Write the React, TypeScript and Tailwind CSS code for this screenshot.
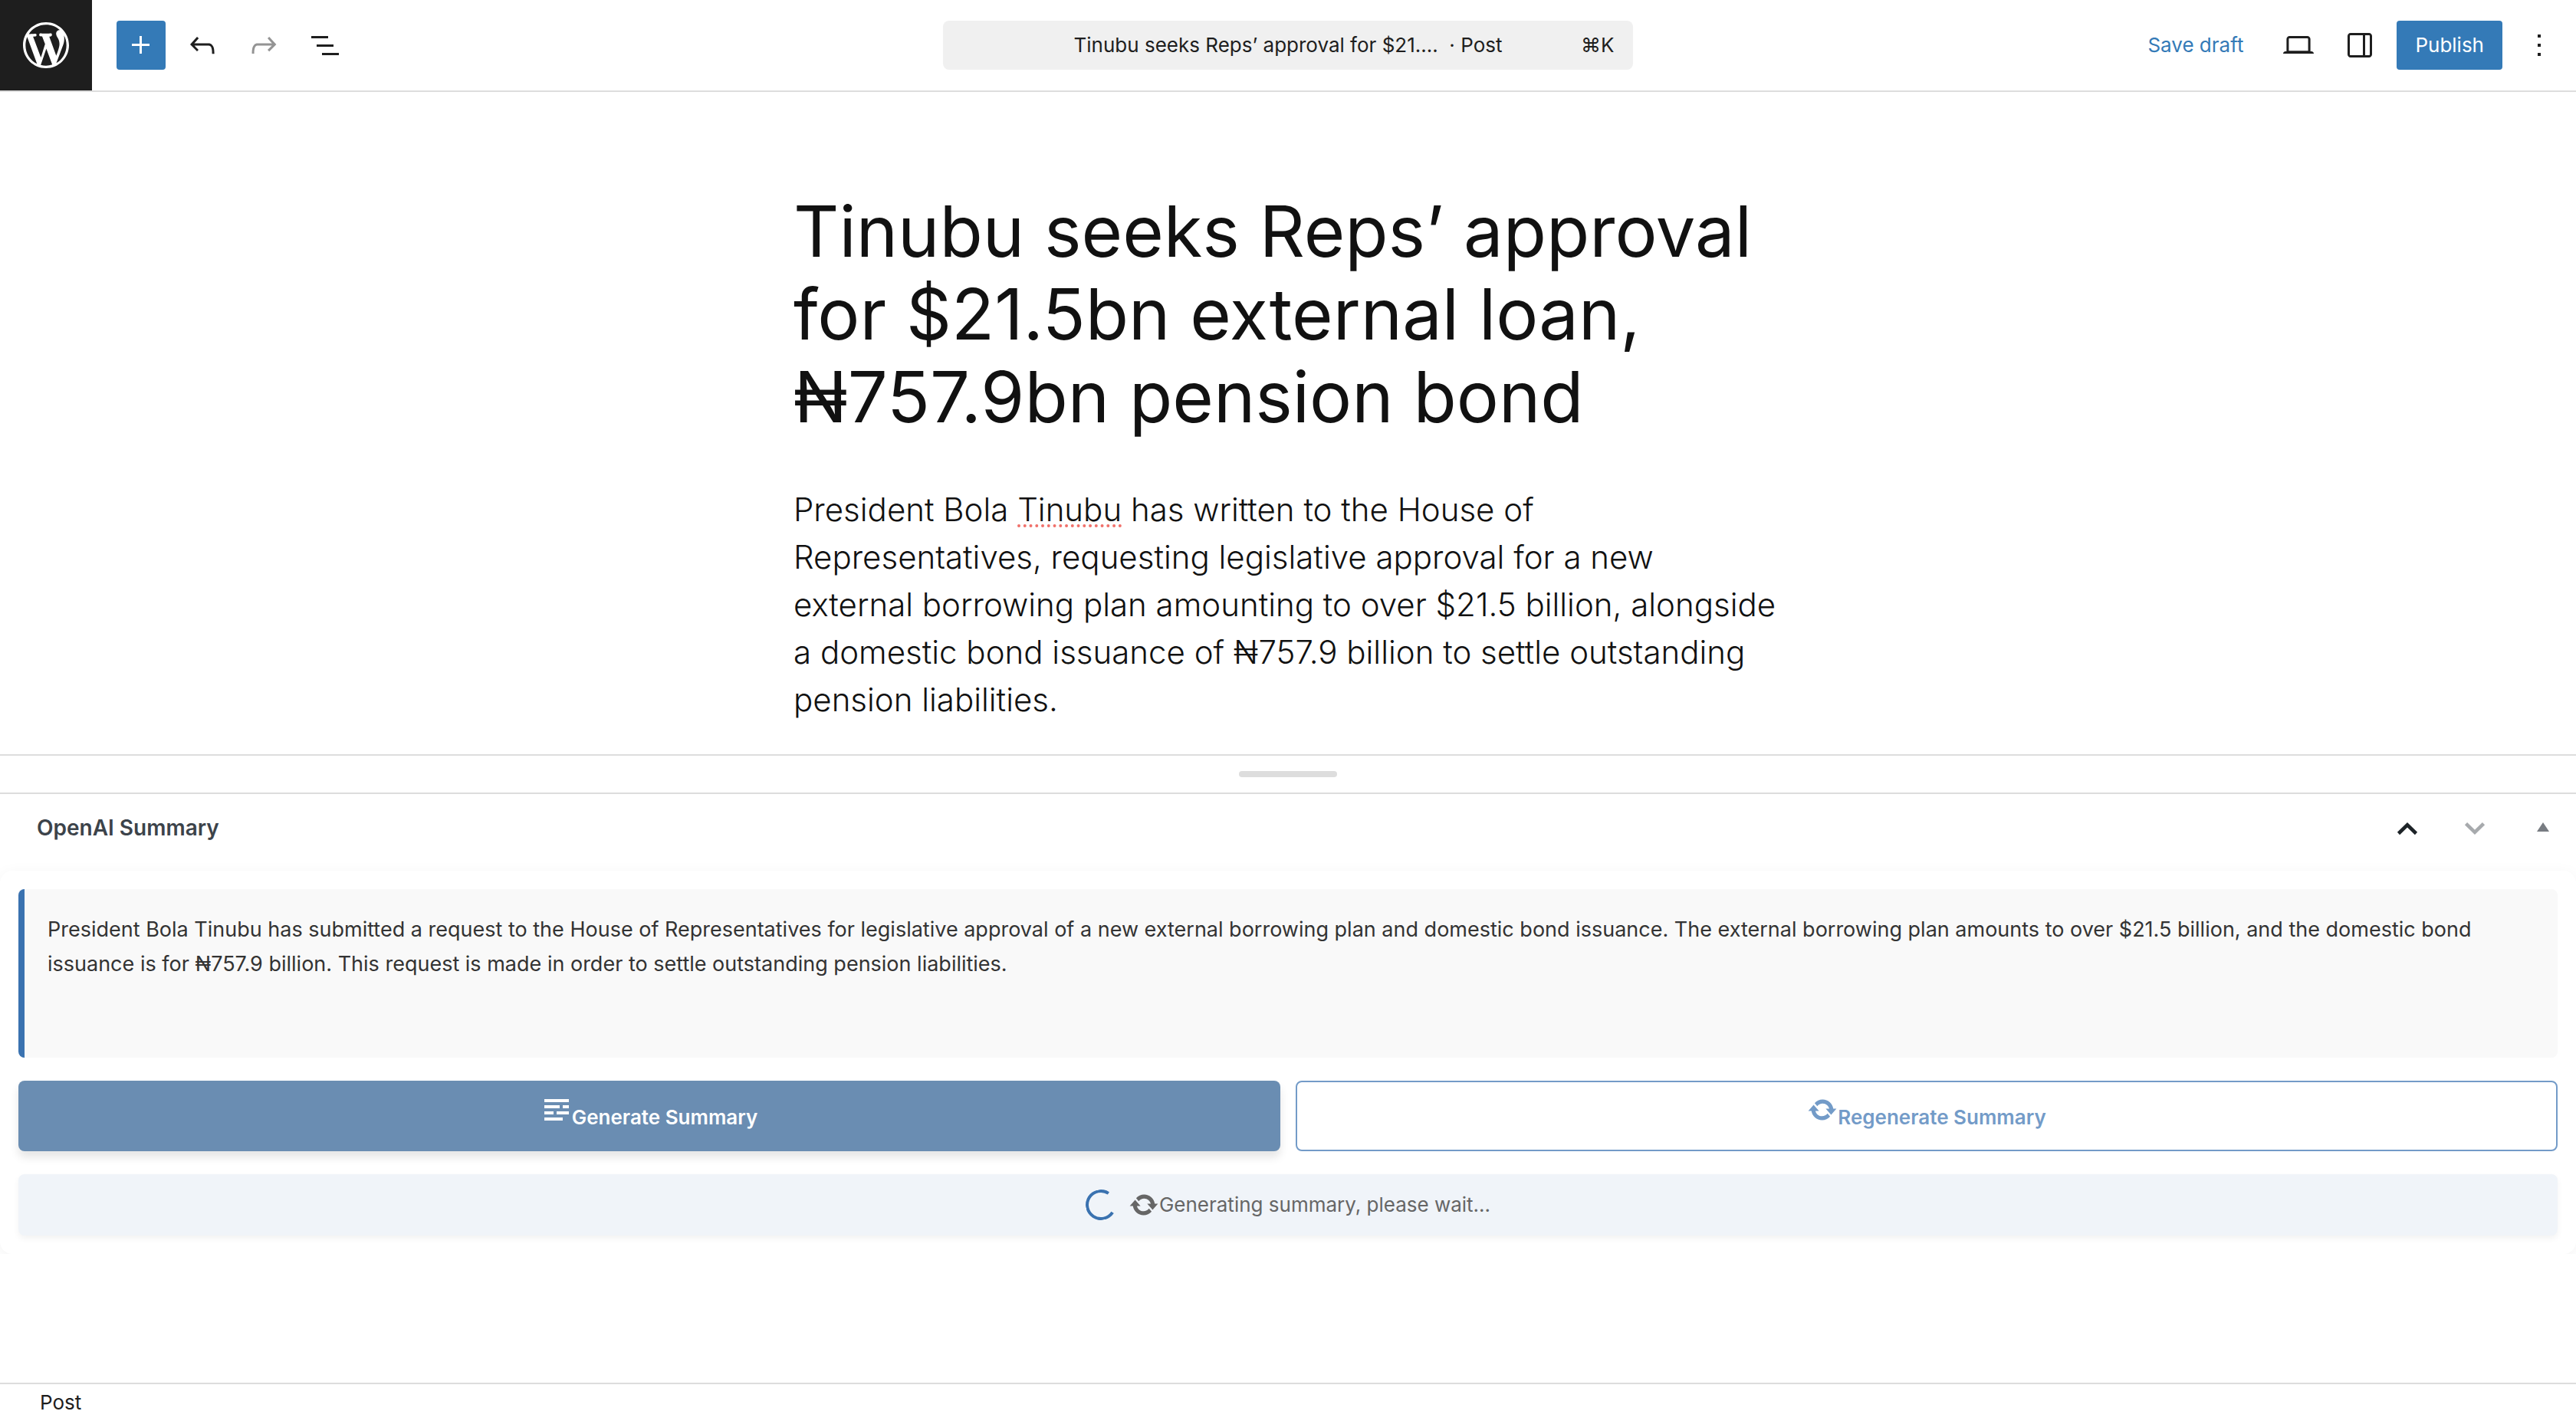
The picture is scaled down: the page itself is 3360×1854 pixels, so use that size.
import { useState } from "react";
import type { ReactNode } from "react";

const PATHS = {
  wordpress:
    "M20 10c0-5.51-4.49-10-10-10C4.48 0 0 4.49 0 10c0 5.52 4.48 10 10 10 5.51 0 10-4.48 10-10zM7.78 15.37L4.37 6.22c.55-.02 1.17-.08 1.17-.08.5-.06.44-1.13-.06-1.11 0 0-1.45.11-2.37.11-.18 0-.37 0-.58-.01C4.12 2.69 6.87 1.11 10 1.11c2.33 0 4.45.87 6.05 2.34-.68-.11-1.65.39-1.65 1.58 0 .74.45 1.36.9 2.1.35.61.55 1.36.55 2.46 0 1.49-1.4 5-1.4 5l-3.03-8.37c.54-.02.82-.17.82-.17.5-.05.44-1.25-.06-1.22 0 0-1.44.12-2.38.12-.87 0-2.33-.12-2.33-.12-.5-.03-.56 1.2-.06 1.22l.92.08 1.26 3.41zM17.41 10c.24-.64.74-1.87.43-4.25.7 1.29 1.05 2.71 1.05 4.25 0 3.29-1.73 6.24-4.4 7.78.97-2.59 1.94-5.2 2.92-7.78zM6.1 18.09C3.12 16.65 1.11 13.53 1.11 10c0-1.3.23-2.48.72-3.59C3.25 10.3 4.67 14.2 6.1 18.09zm4.03-6.63l2.58 6.98c-.86.29-1.76.45-2.71.45-.79 0-1.57-.11-2.29-.33.81-2.38 1.62-4.74 2.42-7.1z",
  plus: "M11 12.5V17.5H12.5V12.5H17.5V11H12.5V6H11V11H6V12.5H11Z",
  undo: "M18.3 11.7c-.6-.6-1.4-.9-2.3-.9H6.7l2.9-3.3-1.1-1-4.5 5L8.5 16l1-1-2.7-2.7H16c.5 0 .9.2 1.3.5 1 1 1 3.4 1 4.5v.3h1.5v-.2c0-1.5 0-4.3-1.5-5.7z",
  redo: "M15.6 6.5l-1.1 1 2.9 3.3H8c-.9 0-1.7.3-2.3.9-1.4 1.5-1.4 4.2-1.4 5.6v.2h1.5v-.3c0-1.1 0-3.5 1-4.5.3-.3.7-.5 1.3-.5h9.2L14.5 15l1.1 1.1 4.6-4.6-4.6-5z",
  listView: "M3 6h11v1.5H3V6Zm3.5 5.5h11V13h-11v-1.5ZM21 17H10v1.5h11V17Z",
  desktop:
    "M20.5 16h-.7V8c0-1.1-.9-2-2-2H6.2c-1.1 0-2 .9-2 2v8h-.7c-.8 0-1.5.7-1.5 1.5h20c0-.8-.7-1.5-1.5-1.5zM5.7 8c0-.3.2-.5.5-.5h11.6c.3 0 .5.2.5.5v7.6H5.7V8z",
  drawer:
    "M18 4H6c-1.1 0-2 .9-2 2v12c0 1.1.9 2 2 2h12c1.1 0 2-.9 2-2V6c0-1.1-.9-2-2-2zm-4 14.5H6c-.3 0-.5-.2-.5-.5V6c0-.3.2-.5.5-.5h8v13zm4.5-.5c0 .3-.2.5-.5.5h-2.5v-13H18c.3 0 .5.2.5.5v12z",
  more: "M13 19h-2v-2h2v2zm0-6h-2v-2h2v2zm0-6h-2V5h2v2z",
  text: "M18 3v2H2V3h16zm-6 4v2H2V7h10zm6 0v2h-4V7h4zM8 11v2H2v-2h6zm10 0v2h-8v-2h8zm-4 4v2H2v-2h12z",
  update:
    "M10.2 3.28c3.53 0 6.43 2.61 6.92 6h2.08l-3.5 4-3.5-4h2.32c-.45-1.97-2.21-3.45-4.32-3.45-1.45 0-2.73.71-3.54 1.78L4.95 5.66C6.23 4.2 8.11 3.28 10.2 3.28zm-.4 13.44c-3.52 0-6.43-2.61-6.92-6H.8l3.5-4c1.17 1.33 2.33 2.67 3.5 4H5.48c.45 1.97 2.21 3.45 4.32 3.45 1.45 0 2.73-.71 3.54-1.78l1.71 1.95c-1.28 1.46-3.15 2.38-5.25 2.38z",
};

function Icon({ name, viewBox = "0 0 24 24", className = "size-12" }: { name: keyof typeof PATHS; viewBox?: string; className?: string }) {
  return (
    <svg viewBox={viewBox} fill="currentColor" aria-hidden="true" className={`${className} shrink-0`}>
      <path d={PATHS[name]} />
    </svg>
  );
}

function ToolButton({ label, disabled, className = "", children }: { label: string; disabled?: boolean; className?: string; children: ReactNode }) {
  return (
    <button type="button" aria-label={label} disabled={disabled} className={`flex size-16 shrink-0 items-center justify-center rounded ${className}`}>
      {children}
    </button>
  );
}

function Header() {
  return (
    <header className="flex h-30 shrink-0 items-stretch border-b-2 border-[#dddddd]">
      <div className="flex flex-1 items-center gap-4 pr-4">
        <a href="#posts" aria-label="View Posts" className="mr-4 flex w-30 items-center justify-center self-stretch bg-[#1e1e1e] text-white">
          <Icon name="wordpress" viewBox="-2 -2 24 24" className="size-18" />
        </a>
        <ToolButton label="Block Inserter" className="bg-[#347ab7] text-white"><Icon name="plus" /></ToolButton>
        <ToolButton label="Undo"><Icon name="undo" /></ToolButton>
        <ToolButton label="Redo" disabled className="text-[#949494]"><Icon name="redo" /></ToolButton>
        <ToolButton label="Document Overview"><Icon name="listView" /></ToolButton>
      </div>
      <button type="button" className="my-auto flex h-16 w-[900px] items-center rounded-lg bg-[#f0f0f0] px-7">
        <span className="w-10" />
        <span className="flex-1 text-center">Tinubu seeks Reps’ approval for $21.... &nbsp;· Post</span>
        <kbd className="w-10 text-right font-[Inter,sans-serif] whitespace-nowrap">⌘K</kbd>
      </button>
      <div className="flex flex-1 items-center justify-end gap-4 pr-4">
        <button type="button" className="mr-2 px-4 text-[#347ab7]">Save draft</button>
        <ToolButton label="View"><Icon name="desktop" /></ToolButton>
        <ToolButton label="Settings"><Icon name="drawer" /></ToolButton>
        <button type="button" className="h-16 rounded bg-[#347ab7] px-6 text-white">Publish</button>
        <ToolButton label="Options"><Icon name="more" /></ToolButton>
      </div>
    </header>
  );
}

function Editor() {
  return (
    <main className="mx-auto w-full max-w-[1290px] text-[#111111]">
      <h1 className="pt-32 text-[92px] leading-[108px]">
        Tinubu seeks Reps’ approval for $21.5bn external loan, ₦757.9bn pension bond
      </h1>
      <p className="max-w-[1284px] pt-[62px] text-[42px] leading-[62px] font-light">
        President Bola{" "}
        <span className="underline decoration-[#f0706a] decoration-dotted decoration-4 underline-offset-4">Tinubu</span>{" "}
        has written to the House of Representatives, requesting legislative approval for a new external borrowing plan
        amounting to over $21.5 billion, alongside a domestic bond issuance of ₦757.9 billion to settle outstanding
        pension liabilities.
      </p>
    </main>
  );
}

function SummaryPanel() {
  const [open, setOpen] = useState(true);
  return (
    <section className="flex-1 overflow-hidden">
      <div className="flex h-22 items-center justify-between pr-4 pl-12">
        <h2 className="text-[28px] leading-9 font-semibold text-[#3c434a]">OpenAI Summary</h2>
        <div className="flex items-center">
          <button type="button" aria-label="Move up" className="flex w-22 justify-center text-[#1d2327]">
            <svg viewBox="0 0 40 40" className="size-10" fill="none" stroke="currentColor" strokeWidth="4.6"><path d="M8.5 27.5 20 16.3 31.5 27.5" /></svg>
          </button>
          <button type="button" aria-label="Move down" disabled className="flex w-22 justify-center text-[#a7aaad]">
            <svg viewBox="0 0 40 40" className="size-10" fill="none" stroke="currentColor" strokeWidth="4.6"><path d="M8.5 14.6 20 25.8 31.5 14.6" /></svg>
          </button>
          <button type="button" aria-label="Toggle panel" aria-expanded={open} onClick={() => setOpen(!open)} className="ml-4 flex w-14 justify-center text-[#787c82]">
            <svg viewBox="0 0 40 40" className="size-10" fill="currentColor"><path d="M13 25 21 13l8 12z" /></svg>
          </button>
        </div>
      </div>
      {open && (
        <div className="-mt-3 overflow-hidden pt-6">
          <div className="rounded-2xl bg-white p-6 shadow-[0_4px_20px_rgba(0,0,0,0.05)]">
            <p className="min-h-55 rounded-lg border-l-8 border-[#3a72b0] bg-[#f9f9f9] px-[30px] py-[30px] text-[27px] leading-[45px] text-[#333333]">
              President Bola Tinubu has submitted a request to the House of Representatives for legislative approval of
              a new external borrowing plan and domestic bond issuance. The external borrowing plan amounts to over
              $21.5 billion, and the domestic bond issuance is for ₦757.9 billion. This request is made in order to
              settle outstanding pension liabilities.
            </p>
            <div className="mt-[30px] grid grid-cols-2 gap-5 font-semibold">
              <button type="button" className="flex h-23 items-center justify-center rounded-lg bg-[#6a8db2] pt-1 text-white shadow-[0_8px_12px_rgba(0,0,0,0.1)]">
                <Icon name="text" viewBox="0 0 20 20" className="mb-5 size-10" />
                Generate Summary
              </button>
              <button type="button" className="flex h-23 items-center justify-center rounded-lg border-2 border-[#739bc8] pt-1 text-[#739bc8]">
                <Icon name="update" viewBox="0 0 20 20" className="mb-5 size-10" />
                Regenerate Summary
              </button>
            </div>
            <div role="status" className="mt-[30px] flex h-20 items-center justify-center rounded-lg bg-[#f0f4f9] text-[#666666] shadow-[0_4px_8px_rgba(0,0,0,0.05)]">
              <span className="mr-4 size-10 -rotate-12 rounded-full border-4 border-[#3a72b0] border-r-transparent" />
              <Icon name="update" viewBox="0 0 20 20" className="size-10" />
              Generating summary, please wait...
            </div>
          </div>
        </div>
      )}
    </section>
  );
}

export default function App() {
  return (
    <div className="flex min-h-screen flex-col bg-white font-[Inter,sans-serif] text-[26px] leading-8 text-[#1e1e1e]">
      <Header />
      <div className="h-[864px] shrink-0 overflow-hidden"><Editor /></div>
      <div className="flex h-[52px] shrink-0 items-center justify-center border-y-2 border-[#dddddd]">
        <div role="separator" aria-label="Drag to resize" className="h-2 w-32 rounded bg-[#dddddd]" />
      </div>
      <SummaryPanel />
      <footer className="flex h-[50px] shrink-0 items-center border-t-2 border-[#dddddd] px-13">Post</footer>
    </div>
  );
}
